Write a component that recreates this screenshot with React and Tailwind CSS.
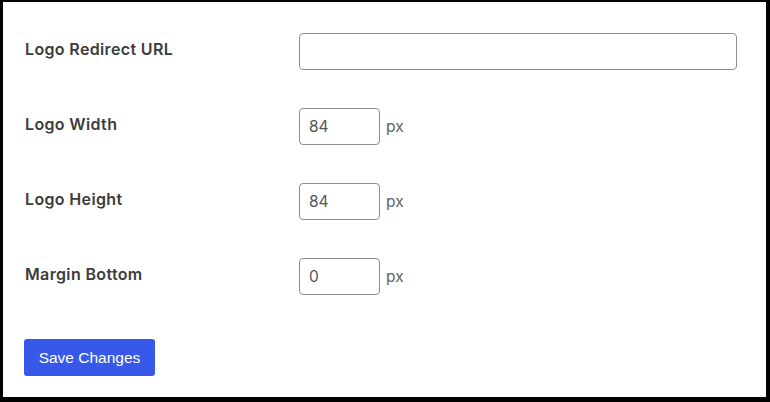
import React from "react";

function Row({ label, children }) {
  return (
    <div className="flex items-center h-[37px]">
      <div className="w-[274px] shrink-0 text-[16px] font-semibold tracking-[0.35px] text-[#3c3c3c] -mt-[5px]">
        {label}
      </div>
      {children}
    </div>
  );
}

function PxInput({ value }) {
  return (
    <div className="flex items-center">
      <input
        defaultValue={value}
        className="w-[81px] h-[37px] rounded-[4px] border border-[#8c8f94] px-[9px] text-[15.5px] text-[#50575e] outline-none"
        style={{ fontFamily: "Inter, sans-serif" }}
      />
      <span className="ml-[6px] text-[15.5px] text-[#5f6368]">px</span>
    </div>
  );
}

export default function App() {
  return (
    <div
      className="w-[770px] h-[402px] bg-white border-black border-t-[2px] border-l-[3px] border-r-[4px] border-b-[5px] pl-[22px] pr-[29px] pt-[31px]"
      style={{ fontFamily: "Inter, 'Noto Sans', sans-serif" }}
    >
      <div className="flex flex-col gap-[38px]">
        <Row label="Logo Redirect URL">
          <input className="flex-1 h-[37px] rounded-[4px] border border-[#8c8f94] px-[9px] text-[15px] outline-none" />
        </Row>
        <Row label="Logo Width">
          <PxInput value="84" />
        </Row>
        <Row label="Logo Height">
          <PxInput value="84" />
        </Row>
        <Row label="Margin Bottom">
          <PxInput value="0" />
        </Row>
      </div>
      <button
        className="mt-[44px] -ml-[1px] w-[131px] h-[37px] rounded-[3px] bg-[#3858e9] text-white text-[15.5px]"
        style={{ fontFamily: "'Liberation Sans', Arial, sans-serif" }}
      >
        Save Changes
      </button>
    </div>
  );
}
